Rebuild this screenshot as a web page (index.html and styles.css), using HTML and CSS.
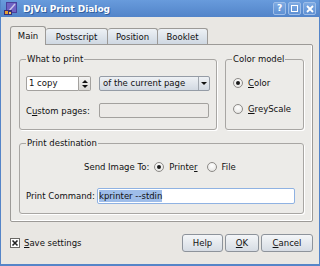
FILE: index.html
```html
<!DOCTYPE html>
<html lang="en">
<head>
    <meta charset="UTF-8">
    <title>DjVu Print Dialog</title>
    <link rel="stylesheet" href="styles.css">
</head>
<body>
    <div class="window">
        <!-- Title bar -->
        <div class="titlebar">
            <svg class="app-icon" width="16" height="16" viewBox="0 0 16 16">
                <rect x="3" y="1" width="11" height="11" fill="#4a3f9a"/>
                <rect x="4" y="2" width="9" height="9" fill="#6f62c4"/>
                <path d="M6 10 L12 3" stroke="#c8c4e8" stroke-width="1.5"/>
                <rect x="1" y="9" width="8" height="5" fill="#3a2f7a"/>
                <rect x="2" y="10" width="3" height="3" fill="#e8a030"/>
                <rect x="6" y="11" width="2" height="2" fill="#f2d060"/>
            </svg>
            <span class="title">DjVu Print Dialog</span>
            <div class="title-buttons">
                <span class="tb-btn">?</span>
                <span class="tb-btn"><span class="max-box"></span></span>
                <span class="tb-btn">
                    <svg width="8" height="8" viewBox="0 0 8 8"><path d="M1 1 L7 7 M7 1 L1 7" stroke="#fff" stroke-width="1.8"/></svg>
                </span>
            </div>
        </div>

        <div class="client">
            <!-- Tabs -->
            <div class="tabs">
                <div class="tab active tab-main">Main</div>
                <div class="tab tab-postscript">Postscript</div>
                <div class="tab tab-position">Position</div>
                <div class="tab tab-booklet">Booklet</div>
            </div>

            <div class="tab-panel">
                <div class="group-row">
                    <fieldset class="group group-what">
                        <legend>What to print</legend>
                        <div class="what-grid">
                            <div class="spin">
                                <span class="spin-field">1 copy</span>
                                <span class="spin-arrows">
                                    <span class="arrow-up"></span>
                                    <span class="arrow-down"></span>
                                </span>
                            </div>
                            <div class="combo">
                                <span class="combo-text">of the current page</span>
                                <span class="combo-arrow"><span class="arrow-down"></span></span>
                            </div>
                            <span class="label">C<u>u</u>stom pages:</span>
                            <span class="field disabled"></span>
                        </div>
                    </fieldset>

                    <fieldset class="group group-color">
                        <legend>Color model</legend>
                        <div class="radio-list">
                            <label class="radio-item"><span class="radio checked"></span><span><u>C</u>olor</span></label>
                            <label class="radio-item"><span class="radio"></span><span><u>G</u>reyScale</span></label>
                        </div>
                    </fieldset>
                </div>

                <fieldset class="group group-dest">
                    <legend>Print destination</legend>
                    <div class="send-row">
                        <span class="label">Send Image To:</span>
                        <label class="radio-item"><span class="radio checked"></span><span>Printe<u>r</u></span></label>
                        <label class="radio-item"><span class="radio"></span><span>File</span></label>
                    </div>
                    <div class="command-row">
                        <span class="label">Print Command:</span>
                        <span class="field focused"><span class="selected">kprinter --stdin</span></span>
                    </div>
                </fieldset>
            </div>

            <!-- Footer -->
            <div class="footer">
                <label class="check-item">
                    <svg class="checkbox" width="10" height="10" viewBox="0 0 10 10">
                        <rect x="0.5" y="0.5" width="9" height="9" fill="#fff" stroke="#6a6864"/>
                        <path d="M2.5 2.5 L7.5 7.5 M7.5 2.5 L2.5 7.5" stroke="#222" stroke-width="1.6"/>
                    </svg>
                    <span><u>S</u>ave settings</span>
                </label>
                <div class="buttons">
                    <button class="btn btn-help">Help</button>
                    <button class="btn btn-ok"><u>O</u>K</button>
                    <button class="btn btn-cancel"><u>C</u>ancel</button>
                </div>
            </div>
        </div>
    </div>
</body>
</html>
```

FILE: styles.css
```css
body {
    margin: 0;
    font-family: "DejaVu Sans", sans-serif;
    font-size: 8.5px;
    color: #111;
}

u {
    text-decoration-thickness: 1px;
    text-underline-offset: 1px;
}

/* Window frame */
.window {
    width: 320px;
    height: 266px;
    box-sizing: border-box;
    border: 1px solid #5585c8;
    border-top: none;
    border-bottom-width: 2px;
    background-color: #e9e7e3;
    display: flex;
    flex-direction: column;
}

/* Title bar */
.titlebar {
    height: 17px;
    flex: none;
    background: linear-gradient(#689bdc, #5284c9);
    display: flex;
    align-items: center;
    padding: 0 3px 0 2px;
}

.app-icon {
    flex: none;
}

.title {
    margin-left: 4px;
    color: #fff;
    font-weight: bold;
    font-size: 9px;
    text-shadow: 1px 1px 0 #33609f;
}

.title-buttons {
    margin-left: auto;
    display: flex;
    gap: 2px;
}

.tb-btn {
    width: 11px;
    height: 11px;
    border: 1px solid #9dbde8;
    border-radius: 2px;
    background: linear-gradient(#7eaae2, #5f91d4);
    color: #fff;
    font-weight: bold;
    font-size: 9px;
    line-height: 11px;
    text-align: center;
    display: flex;
    align-items: center;
    justify-content: center;
}

.max-box {
    width: 5px;
    height: 5px;
    border: 1.5px solid #fff;
}

/* Client area */
.client {
    flex: 1;
    padding: 9px 6px 0 9px;
    display: flex;
    flex-direction: column;
}

/* Tabs */
.tabs {
    display: flex;
    align-items: flex-end;
    height: 18px;
    position: relative;
    z-index: 1;
}

.tab {
    box-sizing: border-box;
    height: 16px;
    border: 1px solid #9c9a97;
    border-bottom: none;
    border-left: none;
    border-radius: 3px 3px 0 0;
    background: linear-gradient(#edf1f5, #cfd8e2);
    display: flex;
    align-items: center;
    justify-content: center;
}

.tab.active {
    height: 19px;
    margin-bottom: -1px;
    border-left: 1px solid #9c9a97;
    background: #ecebe8;
    padding-bottom: 1px;
}

.tab-main { width: 36px; }
.tab-postscript { width: 62px; }
.tab-position { width: 50px; }
.tab-booklet { width: 50px; }

.tab-panel {
    box-sizing: border-box;
    height: 178px;
    border: 1px solid #9c9a97;
    border-radius: 0 2px 2px 2px;
    background: #ecebe8;
    box-shadow: inset -1px -1px 0 #fff;
    padding: 9px 8px 0 8px;
}

/* Group boxes */
.group {
    box-sizing: border-box;
    margin: 0;
    border: 1px solid #a8a6a3;
    border-radius: 3px;
    box-shadow: 1px 1px 0 #fff;
    padding: 0 6px;
    min-width: 0;
}

.group legend {
    padding: 0 1px;
    margin-left: 0;
    line-height: 10px;
}

.group-row {
    display: flex;
    gap: 8px;
}

.group-what {
    width: 198px;
    height: 76px;
    padding-top: 12px;
}

.group-color {
    flex: 1;
    height: 76px;
    padding-top: 14px;
}

.what-grid {
    display: grid;
    grid-template-columns: 73px 1fr;
    grid-template-rows: 15px 15px;
    row-gap: 12px;
    align-items: center;
}

/* Spin box */
.spin {
    display: flex;
    height: 15px;
    width: 65px;
}

.spin-field {
    flex: 1;
    background: #fff;
    border: 1px solid #a3a19e;
    border-radius: 2px 0 0 2px;
    line-height: 13px;
    padding-left: 2px;
}

.spin-arrows {
    width: 11px;
    border: 1px solid #a3a19e;
    border-left: none;
    border-radius: 0 2px 2px 0;
    background: linear-gradient(#f4f4f3, #d9d8d5);
    display: flex;
    flex-direction: column;
    align-items: center;
    justify-content: center;
    gap: 2px;
}

.arrow-up {
    width: 0;
    height: 0;
    border-left: 3px solid transparent;
    border-right: 3px solid transparent;
    border-bottom: 3px solid #111;
}

.arrow-down {
    width: 0;
    height: 0;
    border-left: 3px solid transparent;
    border-right: 3px solid transparent;
    border-top: 3px solid #111;
}

/* Combo box */
.combo {
    display: flex;
    height: 15px;
    box-sizing: border-box;
    border: 1px solid #959ca6;
    border-radius: 2px;
    background: linear-gradient(#eef1f5, #d2d9e2);
}

.combo-text {
    flex: 1;
    padding-left: 3px;
    line-height: 13px;
}

.combo-arrow {
    width: 10px;
    border-left: 1px solid #a0a6ae;
    display: flex;
    align-items: center;
    justify-content: center;
}

/* Text fields */
.field {
    display: block;
    box-sizing: border-box;
    height: 15px;
    border: 1px solid #a3a19e;
    border-radius: 2px;
    background: #fff;
}

.field.disabled {
    background: #eceae7;
    margin-right: 1px;
}

.field.focused {
    flex: 1;
    height: 16px;
    border-color: #8fb2e2;
    padding-left: 1px;
    line-height: 14px;
}

.selected {
    background: #9ebde9;
    padding: 1px 0;
}

/* Radio buttons */
.radio-list {
    display: flex;
    flex-direction: column;
    gap: 16px;
    padding-left: 1px;
}

.radio-item {
    display: flex;
    align-items: center;
    gap: 5px;
}

.radio {
    width: 10px;
    height: 10px;
    box-sizing: border-box;
    border: 1px solid #8c8a87;
    border-radius: 50%;
    background: radial-gradient(circle at 50% 35%, #ffffff, #e2e1de);
    display: flex;
    align-items: center;
    justify-content: center;
}

.radio.checked::after {
    content: "";
    width: 4px;
    height: 4px;
    border-radius: 50%;
    background: #1a1a1a;
}

/* Print destination */
.group-dest {
    margin-top: 8px;
    height: 76px;
    padding-top: 12px;
}

.send-row {
    display: flex;
    align-items: center;
    padding-left: 58px;
    height: 14px;
    gap: 5px;
}

.send-row .radio-item + .radio-item {
    margin-left: 4px;
}

.command-row {
    display: flex;
    align-items: center;
    margin-top: 14px;
    margin-right: 2px;
}

.command-row .label {
    width: 71px;
}

/* Footer */
.footer {
    display: flex;
    align-items: center;
    margin-top: 12px;
    padding-left: 0;
}

.check-item {
    display: flex;
    align-items: center;
    gap: 4px;
}

.buttons {
    margin-left: auto;
    display: flex;
    gap: 2px;
}

.btn {
    height: 18px;
    border: 1px solid #8d939b;
    border-radius: 3px;
    background: linear-gradient(#f4f6f8, #d6dce4);
    font-family: "DejaVu Sans", sans-serif;
    font-size: 8.5px;
    color: #111;
    padding: 0;
}

.btn-help { width: 41px; }
.btn-ok { width: 34px; }
.btn-cancel { width: 52px; }
```
